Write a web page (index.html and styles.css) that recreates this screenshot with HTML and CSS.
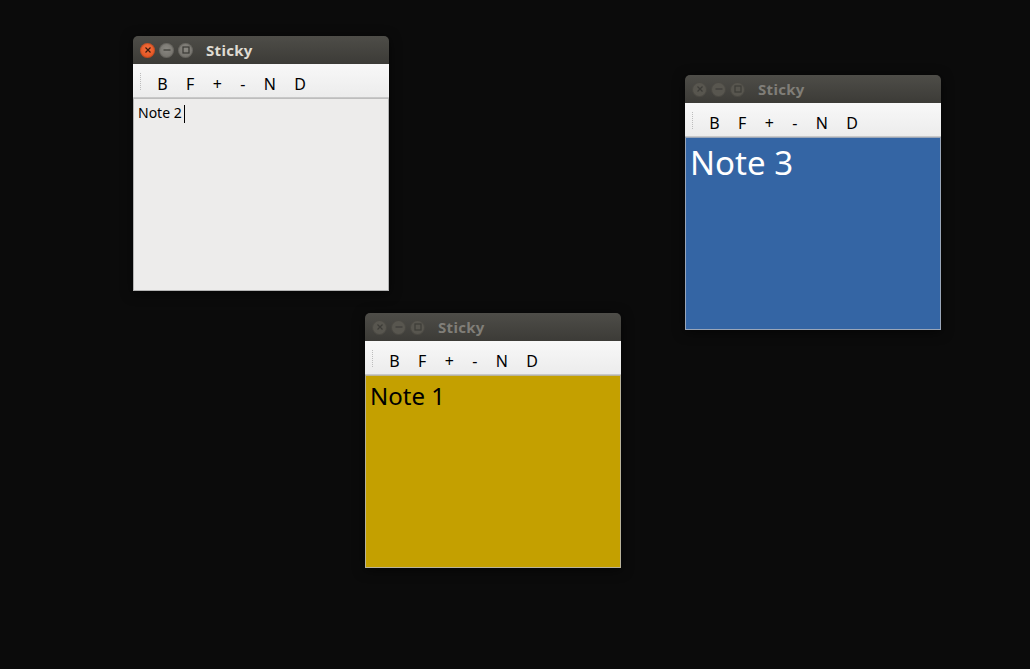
FILE: index.html
```html
<!DOCTYPE html>
<html>
<head>
<meta charset="utf-8">
<link rel="stylesheet" href="styles.css">
</head>
<body>
<div class="desktop">
  <div class="window win-note2 active">
    <div class="titlebar">
      <div class="controls">
        <span class="wbtn close"><svg viewBox="0 0 14 14" width="14" height="14"><path d="M4.5 4.5 L9.5 9.5 M9.5 4.5 L4.5 9.5" /></svg></span>
        <span class="wbtn"><svg viewBox="0 0 14 14" width="14" height="14"><path d="M3.5 7 H10.5" /></svg></span>
        <span class="wbtn"><svg viewBox="0 0 14 14" width="14" height="14"><rect x="4" y="4" width="6" height="6" /></svg></span>
      </div>
      <span class="title">Sticky</span>
    </div>
    <div class="toolbar">
      <span class="grip"></span>
      <span class="tbtn">B</span><span class="tbtn">F</span><span class="tbtn">+</span><span class="tbtn">-</span><span class="tbtn">N</span><span class="tbtn">D</span>
    </div>
    <div class="content plain"><span class="text small">Note 2</span><span class="cursor"></span></div>
  </div>

  <div class="window win-note3">
    <div class="titlebar">
      <div class="controls">
        <span class="wbtn"><svg viewBox="0 0 14 14" width="14" height="14"><path d="M4.5 4.5 L9.5 9.5 M9.5 4.5 L4.5 9.5" /></svg></span>
        <span class="wbtn"><svg viewBox="0 0 14 14" width="14" height="14"><path d="M3.5 7 H10.5" /></svg></span>
        <span class="wbtn"><svg viewBox="0 0 14 14" width="14" height="14"><rect x="4" y="4" width="6" height="6" /></svg></span>
      </div>
      <span class="title">Sticky</span>
    </div>
    <div class="toolbar">
      <span class="grip"></span>
      <span class="tbtn">B</span><span class="tbtn">F</span><span class="tbtn">+</span><span class="tbtn">-</span><span class="tbtn">N</span><span class="tbtn">D</span>
    </div>
    <div class="content blue"><span class="text large">Note 3</span></div>
  </div>

  <div class="window win-note1">
    <div class="titlebar">
      <div class="controls">
        <span class="wbtn"><svg viewBox="0 0 14 14" width="14" height="14"><path d="M4.5 4.5 L9.5 9.5 M9.5 4.5 L4.5 9.5" /></svg></span>
        <span class="wbtn"><svg viewBox="0 0 14 14" width="14" height="14"><path d="M3.5 7 H10.5" /></svg></span>
        <span class="wbtn"><svg viewBox="0 0 14 14" width="14" height="14"><rect x="4" y="4" width="6" height="6" /></svg></span>
      </div>
      <span class="title">Sticky</span>
    </div>
    <div class="toolbar">
      <span class="grip"></span>
      <span class="tbtn">B</span><span class="tbtn">F</span><span class="tbtn">+</span><span class="tbtn">-</span><span class="tbtn">N</span><span class="tbtn">D</span>
    </div>
    <div class="content yellow"><span class="text medium">Note 1</span></div>
  </div>
</div>
</body>
</html>
```
FILE: styles.css
```css
html, body {
  margin: 0;
  padding: 0;
  background: #0b0b0b;
}
body {
  width: 1030px;
  height: 669px;
  overflow: hidden;
  font-family: "Noto Sans", "Open Sans", "DejaVu Sans", sans-serif;
}
.desktop {
  position: relative;
  width: 1030px;
  height: 669px;
  background: #0b0b0b;
}
.window {
  position: absolute;
  width: 256px;
  display: flex;
  flex-direction: column;
  box-shadow: 0 2px 12px rgba(0, 0, 0, 0.6);
  border-radius: 5px 5px 0 0;
}
.win-note2 { left: 133px; top: 36px; }
.win-note3 { left: 685px; top: 75px; }
.win-note1 { left: 365px; top: 313px; }

.titlebar {
  height: 28px;
  display: flex;
  align-items: center;
  padding-left: 7px;
  border-radius: 5px 5px 0 0;
  background: linear-gradient(#4e4d48, #3c3b37);
  box-sizing: border-box;
}
.controls {
  display: flex;
  gap: 4px;
}
.wbtn {
  width: 15px;
  height: 15px;
  border-radius: 50%;
  background: #58564f;
  display: flex;
  align-items: center;
  justify-content: center;
  box-shadow: inset 0 0 0 1px rgba(0,0,0,0.15);
}
.wbtn svg path, .wbtn svg rect {
  fill: none;
  stroke: #3d3c38;
  stroke-width: 1.2;
}
.active .wbtn {
  background: radial-gradient(circle at 50% 40%, #8a8882, #6c6a64);
}
.active .wbtn svg path, .active .wbtn svg rect {
  stroke: #3a3935;
}
.active .wbtn.close {
  background: radial-gradient(circle at 50% 40%, #f5703f, #dc4a17);
}
.active .wbtn.close svg path {
  stroke: #3a1a0c;
}
.title {
  margin-left: 13px;
  font-size: 15px;
  font-weight: bold;
  color: #807e78;
  letter-spacing: 0.3px;
}
.active .title {
  color: #dfdbd2;
}

.toolbar {
  height: 34px;
  display: flex;
  align-items: center;
  padding-left: 6px;
  background: linear-gradient(#f8f8f8, #ececec);
  border-bottom: 1px solid #c8c8c8;
  box-sizing: border-box;
}
.grip {
  width: 3px;
  height: 17px;
  margin-right: 6px;
  background-image: conic-gradient(#bdbdbd 25%, transparent 0);
  background-size: 2px 2px;
  margin-top: 2px;
}
.tbtn {
  font-size: 16px;
  color: #000;
  padding: 0 9.2px;
  line-height: 20px;
  margin-top: 6px;
}

.content {
  height: 193px;
  box-sizing: border-box;
  border: 1px solid #b4b4b4;
  border-top: 1px solid #bdbdbd;
  padding: 4px 4px;
  display: flex;
  align-items: flex-start;
}
.plain { background: #edeceb; }
.blue { background: #3465a4; border-color: #9aa6b8; }
.yellow { background: #c4a000; border-color: #b9b39a; }

.text { line-height: 1.2; }
.small { font-size: 14px; color: #000; margin-top: 2px; }
.medium { font-size: 24px; color: #000; margin-top: 2px; }
.large { font-size: 33px; color: #fff; margin-top: 1px; }
.cursor {
  display: inline-block;
  width: 1px;
  height: 18px;
  background: #000;
  margin-top: 2px;
  margin-left: 2px;
}
```
